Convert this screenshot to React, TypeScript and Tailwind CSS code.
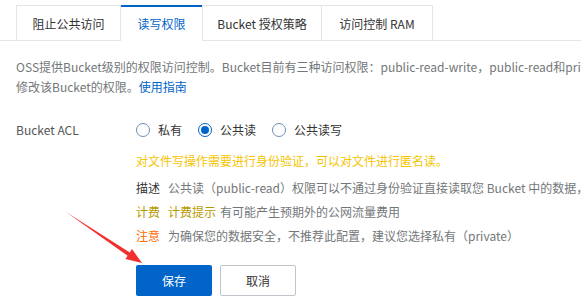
import React from "react";

const font = { fontFamily: '"Noto Sans CJK SC", "Noto Sans", sans-serif' };

function Radio({ checked, label }: { checked?: boolean; label: string }) {
  return (
    <label className="flex items-center">
      <span
        className={
          "flex h-[14px] w-[14px] items-center justify-center rounded-full border bg-white " +
          (checked ? "border-[#0064c8]" : "border-[#6e8fb3]")
        }
      >
        {checked && <span className="h-[8px] w-[8px] rounded-full bg-[#0064c8]" />}
      </span>
      <span className="ml-[8px] text-[12px] text-[#333]">{label}</span>
    </label>
  );
}

export default function App() {
  return (
    <div className="relative h-[308px] w-[581px] overflow-hidden bg-white" style={font}>
      {/* tabs */}
      <div className="flex h-[41px] border-b border-[#e5e5e5] pl-[16px] pt-[5px]">
        <div className="flex h-[36px] w-[105px] items-center justify-center border border-b-0 border-[#e5e5e5] text-[12px] text-[#333]">
          阻止公共访问
        </div>
        <div className="-mb-px flex h-[36px] w-[81px] items-center justify-center border-t-2 border-[#0064c8] bg-white text-[12px] text-[#0064c8]">
          读写权限
        </div>
        <div className="flex h-[36px] w-[120px] items-center justify-center border border-b-0 border-[#e5e5e5] text-[12px] text-[#333]">
          Bucket 授权策略
        </div>
        <div className="flex h-[36px] w-[111px] items-center justify-center border border-b-0 border-l-0 border-[#e5e5e5] text-[12px] text-[#333]">
          访问控制 RAM
        </div>
      </div>

      <div className="pl-[16px] pt-[16px] text-[12px] leading-[20px] text-[#73777a]">
        <p className="whitespace-nowrap">
          OSS提供Bucket级别的权限访问控制。Bucket目前有三种访问权限：public-read-write，public-read和private
        </p>
        <p>
          修改该Bucket的权限。<span className="text-[#0064c8]">使用指南</span>
        </p>
      </div>

      <div className="mt-[23px] flex pl-[16px]">
        <div className="w-[120px] shrink-0 text-[12px] leading-[20px] text-[#555]">Bucket ACL</div>
        <div className="flex flex-col">
          <div className="flex h-[20px] items-center gap-[16px]">
            <Radio label="私有" />
            <Radio checked label="公共读" />
            <Radio label="公共读写" />
          </div>
          <div className="mt-[11px] text-[12px] leading-[20px] text-[#f5c400]">
            对文件写操作需要进行身份验证，可以对文件进行匿名读。
          </div>
          <div className="mt-[7px] flex flex-col gap-[4px] text-[12px] leading-[20px]">
            <div className="flex whitespace-nowrap">
              <span className="w-[32px] text-[#333]">描述</span>
              <span className="text-[#73777a]">
                公共读（public-read）权限可以不通过身份验证直接读取您 Bucket 中的数据，
              </span>
            </div>
            <div className="flex whitespace-nowrap">
              <span className="w-[32px] text-[#b59a00]">计费</span>
              <span className="text-[#b59a00]">计费提示</span>
              <span className="ml-[4px] text-[#73777a]">有可能产生预期外的公网流量费用</span>
            </div>
            <div className="flex whitespace-nowrap">
              <span className="w-[32px] text-[#ff6a00]">注意</span>
              <span className="text-[#73777a]">为确保您的数据安全，不推荐此配置，建议您选择私有（private）</span>
            </div>
          </div>
          <div className="mt-[19px] flex gap-[8px]">
            <button className="flex h-[31px] w-[76px] items-center justify-center rounded-[2px] bg-[#0064c8] text-[12px] text-white">
              保存
            </button>
            <button className="flex h-[31px] w-[76px] items-center justify-center rounded-[2px] border border-[#c0c6cc] bg-white text-[12px] text-[#333]">
              取消
            </button>
          </div>
        </div>
      </div>

      {/* red arrow */}
      <svg className="absolute left-0 top-0" width="581" height="308" viewBox="0 0 581 308">
        <polygon
          points="66,212 129.8,252.4 132,249.1 142,263 125.4,259.1 127.6,255.8"
          fill="#f2302f"
        />
      </svg>
    </div>
  );
}
